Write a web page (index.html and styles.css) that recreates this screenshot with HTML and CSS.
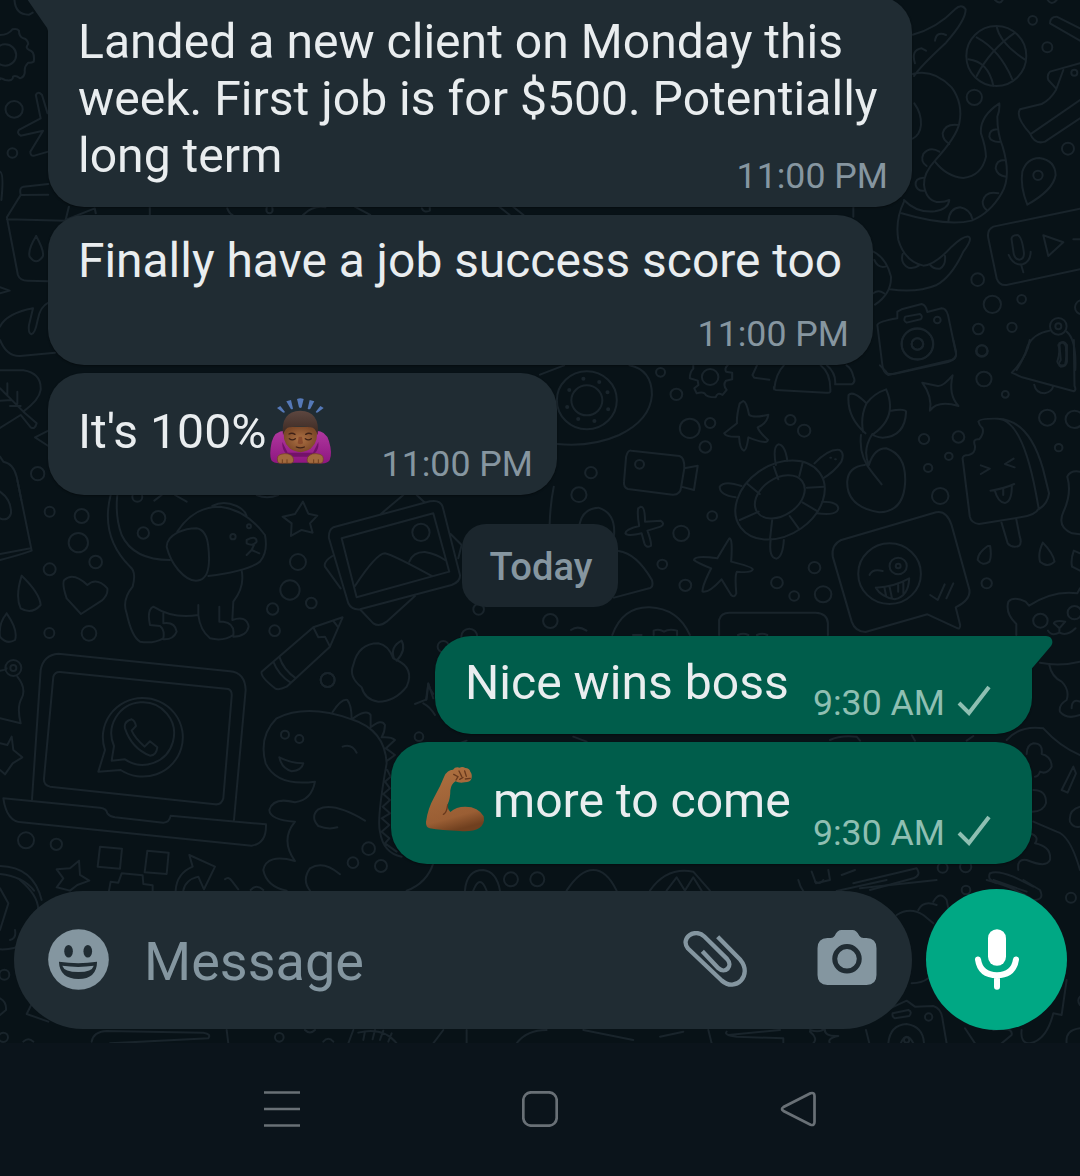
FILE: index.html
```html
<!DOCTYPE html>
<html lang="en">
<head>
<meta charset="utf-8">
<title>Chat</title>
<link rel="stylesheet" href="styles.css">
</head>
<body>
<div class="screen">
<main class="chat">
<svg class="wallpaper" viewBox="0 0 1080 1043" aria-hidden="true">
  <!-- top left: gear, bolt, juice box -->
  <g transform="scale(.3444 .3333)">
    <path d="M42 0Q45 45 85 44L95 38M0 105Q25 105 36 88Q50 85 55 92Q55 110 68 115Q80 118 82 132Q72 145 85 150Q102 155 98 185Q90 190 82 188Q70 200 72 215Q72 230 58 235Q45 225 38 230Q38 245 15 240Q-5 230 0 238"/>
    <circle cx="15" cy="165" r="32"/><circle cx="41" cy="328" r="25"/><circle cx="36" cy="459" r="14"/>
    <path d="M138 340L122 285Q110 272 104 285L118 355L55 390Q48 400 60 407L125 392L88 455Q88 470 100 467L140 455M0 515Q12 520 4 600M140 552L68 560Q55 562 60 585L20 652L52 825Q58 842 80 842L140 844M60 585L140 584M20 658L190 662L200 620M105 708Q80 750 86 770Q105 798 124 770Q130 755 105 708M0 862L28 872L0 880M190 660L275 625L278 640M435 620V645M660 625Q665 640 675 645M775 620Q770 640 783 640Q795 638 790 620M880 645Q910 615 945 622M1030 620L1075 645M1225 625Q1230 640 1248 632V622M1450 620L1480 645M1490 620L1520 645"/>
  </g>
  <!-- left edge: bread, leaf, envelope -->
  <g transform="translate(0 200) scale(.3333)">
    <path d="M145 308Q120 320 113 360Q105 402 94 403Q84 400 87 375L99 325Q20 340 0 380M0 420Q20 470 60 468L165 458M0 511H70Q125 520 122 570Q118 600 70 635L110 670Q105 690 92 682L62 645Q30 665 0 684M0 565L70 635M22 550V585M0 602L35 600M52 575V612M30 618H62M145 692L105 712L145 738M0 770L10 785Q40 790 50 830L64 900"/>
    <circle cx="113" cy="821" r="20"/>
  </g>
  <!-- upper right: octopus, ball, shoe, pin, voice note, camera -->
  <g transform="translate(820 0) scale(.3333)">
    <path d="M278 104Q350 85 405 28Q425 10 437 28Q438 60 378 128Q300 200 282 228M285 190Q272 150 305 145L318 152M345 122Q350 92 378 105M278 222Q340 205 395 262Q430 310 418 370Q410 410 345 482Q310 520 312 555Q318 600 350 606Q372 608 388 600Q385 628 345 634Q290 640 252 600M415 375Q375 370 368 400Q368 420 388 432M358 455Q330 438 310 462Q300 485 320 498M310 533Q285 535 287 555Q292 575 314 572M283 310Q305 340 303 375Q300 405 278 416"/>
    <path d="M345 485Q380 530 430 534Q485 528 498 470Q497 440 483 400Q478 350 538 310Q540 330 532 350Q532 400 548 440Q575 530 545 580Q510 640 455 662Q380 680 245 640M532 388Q508 388 508 410Q512 425 538 426M555 480Q528 480 527 505Q532 528 558 530M535 580Q495 572 488 605Q488 620 500 630M385 664Q388 625 420 622Q450 628 457 656M252 605Q225 660 235 720Q255 785 310 797Q345 795 395 740Q430 708 445 710Q460 715 430 755Q395 830 350 855Q290 880 210 868M248 762Q240 790 265 803Q285 806 296 797M330 794Q340 808 360 806Q378 795 375 768M160 755Q200 775 213 830Q215 880 165 914M163 780Q173 805 196 800M160 880Q175 868 192 880M100 620V650"/>
    <circle cx="529" cy="168" r="90"/>
    <path d="M445 178Q505 185 520 257M530 80Q540 130 614 178M470 112Q540 150 577 238M585 98Q510 150 470 228"/>
    <path d="M780 85L710 50Q690 50 690 70L780 122M780 190L690 215Q680 225 685 240L708 265M730 210L708 270Q690 300 665 312L600 328Q585 350 630 400Q645 435 675 425L780 355M635 400L780 300M525 0Q540 15 548 0M683 0Q695 18 710 0"/>
    <circle cx="763" cy="218" r="9"/><circle cx="638" cy="61" r="13"/><circle cx="682" cy="142" r="15"/><circle cx="463" cy="292" r="23"/><circle cx="744" cy="446" r="18"/>
    <path d="M622 614Q600 560 607 515Q620 475 658 474Q705 480 707 525Q700 570 622 614Z"/><circle cx="654" cy="526" r="14"/>
    <path d="M780 626L520 680Q500 690 505 715L530 835Q538 858 560 855L780 808M575 720Q572 706 592 705Q606 708 612 760Q612 778 598 779Q584 778 581 760ZM566 765Q580 798 608 793Q632 785 632 755M603 793L610 817M670 706L730 727L685 768ZM760 718H780"/>
    <circle cx="473" cy="839" r="19"/><circle cx="517" cy="913" r="26"/><circle cx="605" cy="898" r="13"/><circle cx="475" cy="987" r="16"/><circle cx="576" cy="982" r="14"/><circle cx="486" cy="1052" r="16"/><circle cx="786" cy="922" r="21"/>
    <path d="M172 975Q175 965 232 955V935L245 928L305 912Q318 915 322 936L365 925Q378 925 384 945L408 1060Q410 1075 395 1080L205 1125Q190 1120 187 1095ZM256 950L300 942Q310 950 302 958L260 968Q248 962 256 950Z"/>
    <circle cx="352" cy="960" r="10"/><circle cx="292" cy="1032" r="47"/><circle cx="292" cy="1032" r="17"/>
    <circle cx="715" cy="979" r="25"/><circle cx="715" cy="979" r="9"/>
    <path d="M590 1110Q615 1070 622 1040Q640 1000 690 992M740 995Q770 1020 766 1110M725 1028Q740 1030 738 1050Q740 1080 735 1095Q715 1100 712 1085Q722 1055 715 1035Z"/>
  </g>
  <!-- centre right: phone dial, turtle, sprout, lolly, sticker -->
  <g transform="translate(540 340) scale(.3444 .3333)">
    <path d="M0 104L70 76M260 76Q325 90 325 165Q320 240 230 285Q150 322 50 312M40 440Q30 490 28 552M115 552Q125 505 170 503Q220 520 215 585M228 633Q280 640 325 720Q330 740 320 744L215 773"/>
    <circle cx="136" cy="181" r="87"/><circle cx="136" cy="181" r="45"/>
    <circle cx="126" cy="116" r="3"/><circle cx="172" cy="126" r="3"/><circle cx="196" cy="157" r="3"/><circle cx="198" cy="208" r="3"/><circle cx="158" cy="243" r="3"/><circle cx="111" cy="237" r="3"/><circle cx="79" cy="201" r="3"/><circle cx="85" cy="150" r="3"/>
    <path d="M445 76V86Q435 95 435 115L458 122L460 135L448 145L455 160Q470 155 478 160Q483 172 510 172Q515 155 530 165L542 150Q530 135 540 122L558 118V98L540 95Q535 85 545 76"/><circle cx="494" cy="111" r="24"/>
    <path d="M630 76L617 105L622 113L666 119M680 148Q685 100 708 76M815 76Q845 100 843 155Q840 160 830 158L685 150Q677 148 680 140M833 76Q860 100 857 133H905Q918 125 910 110Q905 85 890 76"/>
    <path d="M987 76L1005 95Q1008 105 1030 101L1185 66Q1212 58 1208 35L1200 0"/><circle cx="1096" cy="12" r="46"/><circle cx="1096" cy="12" r="17"/>
    <path d="M1422 0Q1415 50 1370 98L1400 112L1550 154Q1558 150 1552 138L1550 0M1435 134Q1440 160 1465 160Q1488 155 1490 138M1508 10Q1520 0 1530 15V65Q1528 80 1512 80Q1502 75 1512 60Q1510 40 1508 10"/>
    <path d="M1110 128L1155 138Q1170 140 1198 106Q1185 165 1215 198Q1155 180 1132 212Q1140 170 1110 128Z"/>
    <path d="M590 183Q600 185 607 224Q620 235 663 224Q660 250 632 262Q635 275 662 300Q660 315 605 292Q600 330 592 332Q580 328 578 290Q540 292 535 280L572 250Q570 230 580 190Z"/>
    <path d="M265 332L405 348Q420 352 419 385L458 377L447 450L410 440Q408 465 385 464L255 447Q242 442 244 425L250 350Q255 330 265 332M419 385L410 440"/><circle cx="289" cy="373" r="13"/>
    <g transform="rotate(-36 697 480)"><ellipse cx="697" cy="480" rx="141" ry="105"/><ellipse cx="702" cy="472" rx="80" ry="55"/></g>
    <path d="M679 380L692 418M763 367L753 408M775 443L825 440M762 487L806 514M725 528L753 568M674 541L668 596M635 515L580 540M638 462L600 430M685 375Q675 320 692 313Q712 315 718 362M797 370Q840 325 870 330Q885 340 875 365Q855 395 822 415M585 438Q535 420 522 440Q520 465 568 472M820 485Q865 485 866 505Q865 528 803 520M670 597Q663 655 687 656Q705 650 708 600M843 353h2M857 358h2"/>
    <path d="M945 280Q890 230 896 165Q910 150 948 190Q970 160 1005 148Q1040 230 968 282M948 190Q930 230 938 275M1015 213Q1060 205 1063 215Q1060 290 995 293Q970 290 965 282M932 285Q925 350 965 398L992 433M965 282Q935 330 955 375Q970 325 1005 325Q1065 345 1060 430Q1055 515 985 517Q890 500 892 425Q895 380 943 375"/>
    <path d="M1273 245Q1275 235 1330 236Q1400 240 1440 460L1448 505Q1440 525 1395 532L1275 552Q1252 550 1248 530L1227 355Q1228 345 1245 345Q1265 340 1263 318Q1255 295 1275 298Q1290 280 1285 265Q1275 255 1273 245M1330 236Q1420 240 1460 385L1478 460Q1475 490 1448 508M1340 548L1358 610Q1370 625 1390 618Q1400 610 1393 590L1383 538M1280 376L1306 386L1280 402M1375 356L1350 372L1378 382M1308 452Q1350 445 1377 432M1320 450Q1330 488 1350 489Q1370 485 1370 438M1345 448V465"/>
    <path d="M1150 517Q1180 510 1195 555L1247 750Q1250 780 1207 802L1220 855Q1220 870 1210 864L1125 823L945 876Q915 875 905 845L850 650Q845 615 875 600ZM957 705Q965 685 995 693M975 743Q1030 740 1072 715Q1070 770 1030 778Q990 770 975 743M1000 743L1005 768M1015 740L1022 775M1040 735V755M1055 728V760M1133 765L1155 780L1175 733M1180 775L1200 730"/>
    <circle cx="1015" cy="701" r="91"/><circle cx="1040" cy="678" r="25"/><circle cx="1040" cy="678" r="7"/>
    <path d="M293 500Q305 500 305 545L350 542Q365 552 350 560L312 572Q325 610 322 618Q308 625 303 610L295 580Q255 590 248 580Q248 568 288 558Q282 525 285 505ZM550 595Q560 595 555 665Q615 680 618 688Q615 700 572 695Q565 705 570 760Q565 775 555 765L527 718Q490 760 472 755Q470 740 497 685Q455 668 447 660Q450 645 515 655Q535 620 550 595Z"/>
    <path d="M210 885Q240 800 318 802Q400 805 435 885M520 885V840Q525 818 550 818H800Q835 820 836 850V885M330 885V872Q345 865 360 875Q375 865 398 872V885M90 870Q110 855 135 872M270 885h25M575 885Q590 878 605 885M630 885Q645 878 660 885"/>
    <path d="M1300 618Q1270 640 1271 660Q1285 680 1305 665Q1312 650 1307 618ZM1460 608Q1445 640 1452 665Q1475 685 1494 665Q1490 640 1460 608M1568 640L1550 632Q1540 660 1545 680L1568 692M1568 395Q1540 390 1531 410Q1545 460 1520 515Q1500 560 1545 580L1568 583"/>
    <path d="M1383 885V852Q1350 820 1360 785Q1375 768 1410 785L1420 797Q1490 750 1560 760L1568 745M1492 850Q1495 840 1525 845L1508 865ZM1508 865V878Q1485 890 1475 872M1508 878Q1530 890 1555 865"/><circle cx="1453" cy="842" r="21"/><circle cx="1552" cy="818" r="20"/>
    <circle cx="350" cy="97" r="13"/><circle cx="396" cy="163" r="17"/><circle cx="435" cy="265" r="29"/><circle cx="494" cy="249" r="15"/><circle cx="480" cy="321" r="17"/><circle cx="727" cy="240" r="15"/><circle cx="767" cy="272" r="18"/><circle cx="1283" cy="33" r="17"/><circle cx="1289" cy="117" r="22"/><circle cx="1351" cy="163" r="10"/><circle cx="1115" cy="297" r="15"/><circle cx="1215" cy="291" r="17"/><circle cx="1187" cy="349" r="11"/><circle cx="1127" cy="384" r="12"/><circle cx="1162" cy="468" r="24"/><circle cx="1473" cy="233" r="24"/><circle cx="1552" cy="238" r="26"/><circle cx="1506" cy="323" r="11"/><circle cx="148" cy="398" r="17"/><circle cx="113" cy="464" r="22"/><circle cx="500" cy="528" r="14"/><circle cx="410" cy="580" r="23"/><circle cx="355" cy="673" r="14"/><circle cx="422" cy="736" r="17"/><circle cx="797" cy="683" r="17"/><circle cx="688" cy="728" r="17"/><circle cx="738" cy="768" r="14"/><circle cx="822" cy="763" r="24"/><circle cx="1297" cy="730" r="15"/><circle cx="30" cy="843" r="21"/>
  </g>
  <!-- centre left: puppy, photo, heart, pencil, apple -->
  <g transform="translate(0 480) scale(.3333)">
    <path d="M0 35Q35 60 33 100Q25 125 0 115M52 0L95 212Q60 225 0 240M92 205L0 222M65 287Q45 350 62 385Q95 405 122 375Q120 340 65 287M20 400Q-5 430 0 470Q20 495 45 480Q55 450 20 400M243 402L200 355Q185 310 193 300Q220 275 262 315Q290 290 322 325Q325 345 305 362Z"/>
    <path d="M332 45Q300 170 390 260Q410 275 398 320Q365 360 380 400Q395 470 420 485Q460 492 490 475Q495 450 480 438L450 435Q440 390 460 380Q520 418 595 405Q600 450 630 475Q670 485 700 465Q705 430 670 425H658V380M352 45Q345 110 365 165Q400 240 510 240M490 400V430Q525 425 530 455Q520 480 490 478M595 375V405M725 272Q735 320 700 365L697 420Q740 405 746 440Q740 470 700 470"/>
    <path d="M532 155Q580 80 660 80Q740 90 795 165Q805 215 780 245Q740 275 625 288M532 158Q500 175 500 200Q510 240 535 270Q570 310 600 300Q635 290 625 200Q620 150 590 145Q560 145 532 158M637 78Q670 60 710 78Q735 90 740 108M740 180Q770 165 770 185Q760 200 740 190ZM762 195L755 210L740 225M755 210L778 220M463 62L485 45M525 45L560 65M770 45Q800 58 835 45"/>
    <circle cx="699" cy="170" r="8"/><circle cx="747" cy="139" r="6"/>
    <path d="M909 65L925 101L952 107L930 130L938 158L905 150L873 168L875 130L848 110L885 102Z"/>
    <path d="M1000 142L1290 64Q1320 58 1328 80L1380 285Q1382 305 1355 315L1080 388Q1055 390 1045 370L987 175Q985 150 1000 142M1025 175L1300 100L1348 275L1070 352ZM1140 104L1210 45M1250 45L1275 68M1065 318Q1130 220 1155 220Q1180 225 1295 288M1228 245Q1240 215 1275 216Q1310 222 1335 240M997 228Q970 245 975 260L1022 325M1082 390L1120 430Q1138 442 1160 425L1245 348M1352 162L1385 195L1375 235"/><circle cx="1263" cy="157" r="26"/>
    <path d="M1028 412L940 442L785 575Q780 590 825 625Q835 632 860 620L990 500ZM940 442L955 472L975 470L990 500M820 545Q835 585 872 608M838 530Q850 570 888 595M1000 423L1015 442"/>
    <path d="M1180 535Q1165 495 1135 490Q1075 490 1060 555Q1045 590 1085 622Q1095 660 1135 665Q1185 665 1220 620Q1245 565 1190 540ZM1182 535Q1170 500 1205 482Q1220 510 1190 542M1278 660L1285 612Q1290 630 1300 642"/>
    <circle cx="149" cy="95" r="15"/><circle cx="245" cy="108" r="21"/><circle cx="235" cy="188" r="29"/><circle cx="287" cy="246" r="19"/><circle cx="149" cy="268" r="18"/><circle cx="148" cy="459" r="15"/><circle cx="267" cy="460" r="22"/><circle cx="475" cy="114" r="21"/><circle cx="430" cy="159" r="17"/><circle cx="412" cy="50" r="15"/><circle cx="894" cy="246" r="24"/><circle cx="870" cy="330" r="29"/><circle cx="934" cy="369" r="16"/><circle cx="818" cy="387" r="17"/><circle cx="824" cy="452" r="16"/><circle cx="983" cy="600" r="21"/><circle cx="1330" cy="500" r="17"/><circle cx="1408" cy="470" r="24"/><circle cx="1436" cy="388" r="16"/>
  </g>
  <!-- lower left: laptop, dinosaur, invader, arrow -->
  <g transform="translate(0 640) scale(.3333)">
    <path d="M96 478L122 90Q130 45 175 41L690 94Q735 98 737 150L702 540M180 96L685 147Q697 152 695 170L670 475Q665 495 645 493L150 440Q130 435 132 415L160 110Q165 95 180 96M10 475L300 503Q320 505 322 520Q330 530 345 532L490 548Q508 548 512 527L798 553Q800 610 755 617L65 547Q20 545 10 475"/>
    <path d="M315 330A120 118 0 1 1 362 390L295 395ZM342 318A94 94 0 1 1 375 358L335 362ZM395 238Q370 245 375 265Q395 325 450 347Q470 345 472 322L450 304L434 320Q405 295 395 272L408 258Q405 242 395 238"/>
    <path d="M0 92Q20 90 20 85M52 110Q80 145 65 175Q50 200 62 250L0 235M0 310L22 315L35 290L40 330L67 352L38 370L15 403L0 390M568 645L645 680L612 748L595 710Q555 720 550 752M568 645L578 680Q530 700 527 752"/>
    <circle cx="40" cy="84" r="24"/><circle cx="40" cy="84" r="9"/>
    <path d="M945 425Q830 440 797 370Q775 290 830 235Q920 190 1055 238Q1155 270 1160 370Q1130 540 1140 575Q1150 640 1205 650M945 425Q935 480 885 487Q820 470 808 510Q810 540 885 545Q840 600 885 663Q800 640 790 690Q800 740 860 752M838 352Q875 370 910 370Q905 392 875 394Q845 385 838 352M1028 320Q1055 310 1070 338M1095 542Q1000 485 955 508Q930 530 955 558Q985 570 1012 562M1020 703Q970 660 930 685Q905 720 930 752M998 216Q1025 175 1042 180Q1055 195 1055 238Q1100 205 1112 225L1112 262Q1145 235 1155 255Q1155 275 1145 292Q1175 290 1185 300L1158 325L1185 345L1162 362M1162 390L1172 410L1155 425L1170 445L1150 462L1170 480L1148 500L1170 520L1145 535L1168 555L1145 575L1168 595L1155 610L1190 635M1220 752Q1280 730 1300 670"/>
    <circle cx="855" cy="284" r="12"/><circle cx="898" cy="297" r="12"/>
    <path d="M300 620L366 626L360 686L293 680ZM442 632L506 638L500 702L434 697ZM327 752L332 725L355 728L365 700L428 706L430 732L458 736V752M170 688L210 685L237 662L240 705L268 722L232 735L210 752L170 742L190 715ZM0 678Q100 680 125 780M0 702Q70 710 102 752M675 718Q685 708 695 722L715 748M752 750Q770 730 790 750M1245 192L1280 178L1285 130L1300 175M1270 190Q1290 200 1305 225"/>
    <circle cx="78" cy="601" r="24"/><circle cx="169" cy="613" r="17"/><circle cx="983" cy="120" r="21"/><circle cx="1257" cy="290" r="13"/><circle cx="1106" cy="626" r="19"/><circle cx="1059" cy="668" r="16"/><circle cx="1143" cy="678" r="18"/><circle cx="1533" cy="718" r="21"/><circle cx="1612" cy="718" r="21"/>
    <path d="M1395 752Q1400 690 1450 690Q1490 695 1500 752M1420 752Q1440 700 1460 752M1700 752Q1740 690 1780 690Q1820 690 1850 752M1950 752Q2000 680 2080 695L2130 752M2000 752L2030 712L2055 752L2080 712L2105 752M1350 320L1400 302M1720 290L1760 305"/>
  </g>
  <!-- around the composer -->
  <g transform="translate(0 880) scale(.3333)">
    <path d="M0 25L25 70L0 150M60 0Q130 60 110 110M45 150Q50 175 30 180M0 208Q40 210 75 190M95 372L80 402L145 425M0 355Q20 365 18 390L0 405M275 485Q280 455 320 453L610 458Q635 462 625 475L330 490M680 450L685 490M1060 450L1045 490M1075 458Q1150 440 1190 490M1095 455L1090 480M1125 450L1118 478M1150 452L1140 480M1175 460L1165 485M70 485Q85 470 100 485M970 485Q985 468 1000 485M915 450Q930 465 945 450M1300 490L1330 450M1400 450V490M1550 490Q1580 450 1640 450M1750 450L1900 480"/>
    <circle cx="13" cy="284" r="15"/><circle cx="10" cy="472" r="14"/><circle cx="838" cy="472" r="13"/>
  </g>
  <g transform="translate(660 880) scale(.3333)">
    <path d="M415 0Q420 20 430 33M490 0Q480 15 465 5M530 33L680 0M600 25L830 0M710 105Q750 80 790 105L820 130M775 90Q790 60 830 75M820 65Q840 30 860 60L865 85M755 310Q785 310 805 295M0 470L70 455M145 450L155 490M205 465L360 450M200 455Q190 465 230 470L370 475V490M450 450Q480 460 495 445Q490 470 535 468Q500 475 510 490M460 490Q475 475 450 455M618 450L628 490M690 385L740 362L765 380L820 378Q845 385 848 420L860 490M698 400L745 390Q758 395 748 408L705 415Q695 410 698 400M685 490Q690 435 740 432Q790 440 792 490M722 490Q740 450 760 490M915 445L945 490M1000 450Q1060 440 1055 465L1025 490M1085 450Q1080 490 1110 490Q1160 480 1180 400L1205 405L1220 300M980 0Q1060 20 1120 60Q1155 60 1140 30L1090 0M1000 0L1100 35M1260 350Q1250 360 1260 375M1220 490Q1215 450 1260 445"/>
    <circle cx="806" cy="411" r="11"/><circle cx="918" cy="30" r="13"/><circle cx="1233" cy="53" r="15"/><circle cx="740" cy="480" r="8"/>
  </g>
  <!-- right edge beside the sent messages -->
  <g transform="translate(800 620) scale(.3333)">
    <path d="M720 128Q780 140 840 125M748 135Q755 170 785 185Q810 210 800 240Q775 255 780 275Q800 300 840 285M840 245Q815 235 815 265M620 360Q660 315 730 325Q780 380 840 405M680 402Q680 375 700 370Q730 370 725 402Q755 410 755 440Q740 465 720 455Q715 470 705 470M820 440L785 510L803 518L828 460ZM700 510Q740 510 738 550Q730 575 697 575M840 560Q805 570 810 605Q820 625 840 620M700 605L770 635Q810 645 840 750M690 640Q720 650 705 670Q755 680 750 720Q740 745 680 720Q650 715 655 750M35 755L48 790L90 780L85 750M125 765L165 750M160 790L350 745Q365 765 340 775L210 810M570 760Q590 750 640 770L700 800M570 760Q560 780 590 790M90 360Q120 345 170 350L180 362M335 345L345 362M500 362L520 348"/>
    <circle cx="428" cy="743" r="15"/><circle cx="497" cy="740" r="17"/>
  </g>
</svg>

<section class="messages">
  <div class="bubble in first">
    <svg class="tail tail-left" viewBox="0 0 21 32"><path d="M0 0H21V32Q20 28 18 26Z"/></svg>
    <p class="text">Landed a new client on Monday this<br>week. First job is for $500. Potentially<br>long term</p>
    <span class="meta">11:00 PM</span>
  </div>
  <div class="bubble in second">
    <p class="text">Finally have a job success score too</p>
    <span class="meta">11:00 PM</span>
  </div>
  <div class="bubble in third">
    <p class="text">It's 100%<svg class="emoji bow" viewBox="0 0 192 204" role="img" aria-label="person bowing">
      <defs>
        <linearGradient id="sleeve" x2="0" y2="1"><stop stop-color="#b0389f"/><stop offset="1" stop-color="#8e1680"/></linearGradient>
        <linearGradient id="hair" x2="0" y2="1"><stop stop-color="#5d4740"/><stop offset="1" stop-color="#3a2720"/></linearGradient>
        <radialGradient id="face"><stop stop-color="#ad7144"/><stop offset="1" stop-color="#7d4928"/></radialGradient>
      </defs>
      <g fill="#5579b8"><path d="M84 3Q94-1 104 3L98 28Q94 32 90 28Z"/><path d="M52 10L66 6L72 32Q68 36 65 32Z"/><path d="M136 10L122 6L116 32Q120 36 124 32Z"/><path d="M24 30L34 24L48 42Q45 46 41 43Z"/><path d="M164 30L154 24L140 42Q143 46 147 43Z"/></g>
      <path fill="url(#sleeve)" d="M48 98Q16 98 8 132Q0 170 7 187Q16 200 52 194H136Q174 201 182 187Q191 166 180 130Q172 98 140 98Z"/>
      <path fill="#731269" d="M40 132Q38 168 70 176H118Q152 166 148 132L132 164H56Z"/>
      <path fill="url(#face)" d="M47 86Q36 128 62 151Q94 174 126 151Q152 128 141 86Z"/>
      <path fill="url(#hair)" d="M42 112Q34 40 94 38Q154 40 146 112Q138 84 120 88Q94 80 66 88Q50 84 42 112Z"/>
      <path fill="none" stroke="#3d2016" stroke-width="4" stroke-linecap="round" d="M60 108Q69 103 78 109M110 109Q119 103 128 108M61 122Q70 129 79 122M109 122Q118 129 127 122M82 147Q94 152 106 147"/>
      <path fill="#8a4b2c" d="M89 116H99L102 136Q94 142 86 136Z"/>
      <path fill="#a26a3e" stroke="#70401f" stroke-width="2" d="M26 190Q22 172 36 169Q60 162 72 178Q77 194 66 196H34Q27 196 26 190ZM162 190Q166 172 152 169Q128 162 116 178Q111 194 122 196H154Q161 196 162 190Z"/>
      <path fill="none" stroke="#70401f" stroke-width="3" d="M40 184V196M54 184V196M134 184V196M148 184V196"/>
    </svg></p>
    <span class="meta">11:00 PM</span>
  </div>

  <div class="day">Today</div>

  <div class="bubble out fourth">
    <svg class="tail tail-right" viewBox="0 0 22 34"><path d="M0 0H15C21 0 23 6 20 10L3 30Q1 32 0 34Z"/></svg>
    <p class="text">Nice wins boss</p>
    <span class="meta">9:30 AM<svg class="tick" viewBox="0 0 34 31"><path d="M2 18L12 28L32 2"/></svg></span>
  </div>
  <div class="bubble out fifth">
    <p class="text"><svg class="emoji arm" viewBox="0 0 180 198" role="img" aria-label="flexed biceps">
      <defs><linearGradient id="skin" x1=".2" x2=".45" y2="1"><stop stop-color="#ad7040"/><stop offset=".8" stop-color="#9a5e34"/><stop offset="1" stop-color="#70401f"/></linearGradient></defs>
      <path fill="url(#skin)" d="M58 28Q67 8 84 8Q91-2 104 2Q112-3 121 3Q133 3 136 14Q143 22 139 36Q135 46 119 46Q103 49 91 43Q78 52 76 70Q76 96 68 112Q67 126 76 135Q93 119 121 119Q160 119 176 148Q181 170 163 183Q143 195 105 192Q49 190 14 184Q2 181 3 165Q8 125 28 90Q47 57 58 28Z"/>
      <path fill="none" stroke="#68391d" stroke-width="4" stroke-linecap="round" d="M68 114Q65 138 55 142M86 22L99 29L93 39M102 12L110 28M119 12L124 28M104 37L114 31M121 36L136 34"/>
    </svg>more to come</p>
    <span class="meta">9:30 AM<svg class="tick" viewBox="0 0 34 31"><path d="M2 18L12 28L32 2"/></svg></span>
  </div>
</section>

<footer class="composer">
  <div class="field">
    <svg class="smile" viewBox="0 0 184 184"><circle cx="92" cy="92" r="91.500" fill="#8496a0"/><g fill="#202c33"><ellipse cx="62" cy="67" rx="13" ry="19"/><ellipse cx="120" cy="67" rx="13" ry="19"/><path d="M33 99Q92 108 148 99Q147 151 92 151Q35 150 33 99Z"/></g><path fill="#8496a0" d="M43 111Q92 118 138 111Q133 130 92 130Q49 130 43 111Z"/></svg>
    <span class="placeholder">Message</span>
    <svg class="clip" viewBox="0 0 192 170"><path d="M104 17L172 86C210 132 158 185 116 148L15 52C-10 22 35-12 64 16L132 83C152 105 126 130 106 111L58 60"/></svg>
    <svg class="camera" viewBox="0 0 178 166"><path fill="#8496a0" d="M30 24H40Q47 24 52 17Q59 0 73 0H105Q118 0 126 17Q131 24 139 24H148Q178 25 178 55V136Q178 166 148 166H30Q0 166 0 136V55Q0 25 30 24Z"/><circle cx="89" cy="87" r="37" fill="#8496a0" stroke="#202c33" stroke-width="15"/></svg>
  </div>
  <div class="mic"><svg viewBox="0 0 132 182"><rect x="39" width="54" height="110" rx="27" fill="#fff"/><path fill="none" stroke="#fff" stroke-width="18" stroke-linecap="round" d="M9 91Q16 138 66 138Q116 138 123 91M66 140V173"/></svg></div>
</footer>
</main>

<nav class="navbar">
  <svg viewBox="0 0 36 36"><path d="M0 1.500H36M0 18H36M0 34.500H36"/></svg>
  <svg viewBox="0 0 36 36"><rect x="1.300" y="1.300" width="33.400" height="33.400" rx="8"/></svg>
  <svg viewBox="0 0 36 36"><path d="M30.500 2.300L3.500 16Q.5 18 3.500 20L30.500 33.700Q34.500 35 34.500 31V5Q34.500 1 30.500 2.300Z"/></svg>
</nav>
</div>
</body>
</html>
```
FILE: styles.css
```css
* { box-sizing: border-box; }

body {
  margin: 0;
  background: #0b141b;
  font-family: Roboto, "Liberation Sans", sans-serif;
}

.screen {
  width: 1080px;
  height: 1176px;
  overflow: hidden;
  display: flex;
  flex-direction: column;
}

.chat {
  position: relative;
  height: 1043px;
  background: #081217;
  display: flex;
  flex-direction: column;
  overflow: hidden;
}

.wallpaper {
  position: absolute;
  inset: 0;
  width: 1080px;
  height: 1043px;
  fill: none;
  stroke: #19242b;
  stroke-width: 6;
  stroke-linecap: round;
  stroke-linejoin: round;
}

.messages {
  position: relative;
  display: flex;
  flex-direction: column;
  gap: 8px;
  padding: 0 48px;
  margin-top: -4px;
  height: 868px;
}

.bubble {
  position: relative;
  display: grid;
  grid-template-columns: minmax(0, 1fr);
  flex: none;
  border-radius: 36px;
  padding: 18px 24px 0 30px;
  box-shadow: 0 1px 2px rgba(0, 0, 0, .35);
}
.bubble > .text, .bubble > .meta { grid-area: 1 / 1; }

.in { background: #202c33; align-self: flex-start; }
.out { background: #005d4b; align-self: flex-end; }

.first { width: 864px; height: 211px; padding-top: 17px; border-top-left-radius: 0; }
.second { width: 825px; height: 150px; }
.third { width: 509px; height: 122px; padding-top: 30px; }
.fourth { width: 597px; height: 98px; border-top-right-radius: 0; }
.fifth { width: 641px; height: 122px; padding-top: 30px; }

.text {
  margin: 0;
  color: #e9edef;
  font-size: 48.1px;
  line-height: 57px;
  white-space: nowrap;
}
.second .text { font-size: 47.9px; }

.meta {
  place-self: end;
  display: flex;
  color: #8696a0;
  font-size: 35.7px;
  line-height: 42px;
  padding-bottom: 10px;
}
.out .meta { color: #8fbfb2; padding-right: 17px; }

.tail { position: absolute; top: 0; fill: #202c33; }
.tail-left { left: -21px; top: 3px; width: 21px; height: 32px; }
.tail-right { right: -21px; width: 22px; height: 34px; fill: #005d4b; }

.tick {
  width: 34px;
  height: 31px;
  margin: 3px 0 0 12px;
  fill: none;
  stroke: #8fbfb2;
  stroke-width: 4;
}

.emoji { display: inline-block; overflow: visible; }
.bow { width: 64px; height: 68px; margin: -5px 0 0 3px; vertical-align: top; }
.arm { width: 60px; height: 66px; margin: -5px 8px 0 4px; vertical-align: top; }

.day {
  flex: none;
  align-self: center;
  width: 156px;
  height: 83px;
  margin: 21px 0;
  padding-left: 2px;
  border-radius: 24px;
  background: #1b262d;
  color: #8696a0;
  font-size: 38.2px;
  font-weight: 500;
  line-height: 87px;
  text-align: center;
}

.composer {
  position: relative;
  display: flex;
  align-items: center;
  gap: 14px;
  padding: 25px 13px 0 14px;
}

.field {
  display: flex;
  align-items: center;
  width: 898px;
  height: 138px;
  border-radius: 69px;
  padding: 0 35px 0 34px;
  background: #202c33;
}
.smile { width: 61px; height: 61px; }
.placeholder {
  flex: 1;
  margin: 3px 0 0 35px;
  color: #8496a0;
  font-size: 54px;
}
.clip {
  width: 64px;
  height: 57px;
  margin-right: 70px;
  fill: none;
  stroke: #8496a0;
  stroke-width: 13;
  stroke-linejoin: round;
}
.camera { width: 60px; height: 55px; margin-top: -4px; }

.mic {
  display: grid;
  place-items: center;
  width: 141px;
  height: 141px;
  border-radius: 50%;
  background: #00a884;
}
.mic svg { width: 44px; height: 61px; }

.navbar {
  height: 133px;
  display: flex;
  justify-content: center;
  align-items: center;
  gap: 222px;
  padding-bottom: 1px;
  background: #0b141b;
}
.navbar svg {
  width: 36px;
  height: 36px;
  fill: none;
  stroke: #697076;
  stroke-width: 2.7;
}
```
